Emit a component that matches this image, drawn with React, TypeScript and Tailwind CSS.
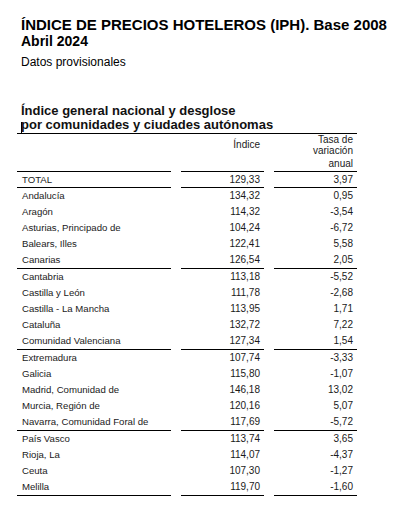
const groups: [string, string, string][][] = [
  [
    ['Andalucía', '134,32', '0,95'],
    ['Aragón', '114,32', '-3,54'],
    ['Asturias, Principado de', '104,24', '-6,72'],
    ['Balears, Illes', '122,41', '5,58'],
    ['Canarias', '126,54', '2,05'],
  ],
  [
    ['Cantabria', '113,18', '-5,52'],
    ['Castilla y León', '111,78', '-2,68'],
    ['Castilla - La Mancha', '113,95', '1,71'],
    ['Cataluña', '132,72', '7,22'],
    ['Comunidad Valenciana', '127,34', '1,54'],
  ],
  [
    ['Extremadura', '107,74', '-3,33'],
    ['Galicia', '115,80', '-1,07'],
    ['Madrid, Comunidad de', '146,18', '13,02'],
    ['Murcia, Región de', '120,16', '5,07'],
    ['Navarra, Comunidad Foral de', '117,69', '-5,72'],
  ],
  [
    ['País Vasco', '113,74', '3,65'],
    ['Rioja, La', '114,07', '-4,37'],
    ['Ceuta', '107,30', '-1,27'],
    ['Melilla', '119,70', '-1,60'],
  ],
];

const Row = ({ cells, last, lead = 'leading-[16px]' }: { cells: [string, string, string]; last: boolean; lead?: string }) => {
  const line = last ? 'border-b border-black' : '';
  return (
    <div className="grid grid-cols-[154px_83px_83px] gap-x-[10px]">
      <div className={`pl-[5px] text-[9.6px] ${lead} ${line}`}>{cells[0]}</div>
      <div className={`pr-[4px] text-right ${lead} ${line}`}>{cells[1]}</div>
      <div className={`pr-[4px] text-right ${lead} ${line}`}>{cells[2]}</div>
    </div>
  );
};

export default function App() {
  return (
    <div className="w-[402px] h-[515px] bg-white text-black font-['Liberation_Sans',Arial,sans-serif]">
      <div className="pl-[21px] pt-[16px]">
        <h1 className="text-[15px] font-bold leading-[17px]">ÍNDICE DE PRECIOS HOTELEROS (IPH). Base 2008</h1>
        <h2 className="text-[14px] font-bold leading-[16px]">Abril 2024</h2>
        <p className="mt-[6px] text-[12px] leading-[14px]">Datos provisionales</p>
      </div>

      <div className="ml-[17px] mt-[35px] w-[340px]">
        <div className="relative border-b border-black pb-[1px] pl-[4px] text-[13px] font-bold leading-[14px] text-[#111]">
          <div>Índice general nacional y desglose</div>
          <div>por comunidades y ciudades autónomas</div>
          <span className="absolute left-[4px] top-[18px] h-[11px] w-px bg-black" />
        </div>

        <div className="text-[10px] text-[#1a1a1a]">
          <div className="grid h-[38px] grid-cols-[154px_83px_83px] gap-x-[10px]">
            <div className="border-b border-black" />
            <div className="border-b border-black pr-[4px] pt-[5px] text-right leading-[11px]">Índice</div>
            <div className="border-b border-black pr-[4px] text-right leading-[11px]">
              <div>Tasa de</div>
              <div>variación</div>
              <div className="mt-[2px]">anual</div>
            </div>
          </div>

          <Row cells={['TOTAL', '129,33', '3,97']} last lead="leading-[15px]" />

          {groups.map((g, gi) => (
            <div key={gi}>
              {g.map((r, i) => (
                <Row key={r[0]} cells={r} last={i === g.length - 1} />
              ))}
            </div>
          ))}
        </div>
      </div>
    </div>
  );
}
